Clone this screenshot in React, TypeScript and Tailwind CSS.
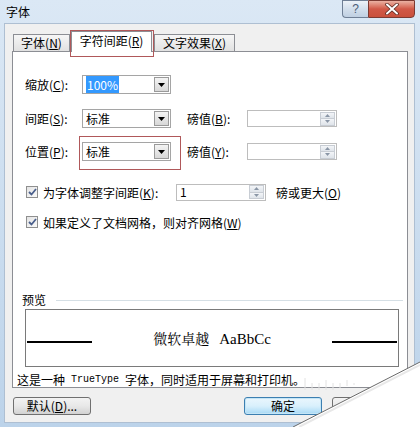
import React from "react";

function Arrow() {
  return (
    <div className="flex h-[15px] w-[15px] items-center justify-center border border-[#9a9a9a] bg-gradient-to-b from-[#f4f4f4] to-[#d8d8d8]">
      <svg width="7" height="4" viewBox="0 0 7 4">
        <path d="M0 0H7L3.5 4Z" fill="#000" />
      </svg>
    </div>
  );
}

function Combo({ children, red }: { children: React.ReactNode; red?: boolean }) {
  return (
    <div className="relative flex h-[19px] w-[89px] items-center border border-[#a5a5a5] bg-white pl-[3px] pr-[1px]">
      <div className="flex-1 leading-[15px]">{children}</div>
      <Arrow />
      {red && (
        <div className="absolute -left-[4px] -top-[7px] h-[34px] w-[102px] border border-[#b0585a]" />
      )}
    </div>
  );
}

function Spin({ value, w = "w-[90px]" }: { value?: string; w?: string }) {
  return (
    <div className={`flex h-[17px] ${w} items-center border border-[#bdbdbd] bg-white pl-[3px] pr-[1px]`}>
      <div className="flex-1 leading-[14px]">{value}</div>
      <div className="flex h-[14px] w-[15px] flex-col border border-[#c8cdd4]">
        <div className="flex flex-1 items-center justify-center bg-gradient-to-b from-[#f3f5f8] to-[#dfe4ea]">
          <svg width="5" height="3" viewBox="0 0 5 3">
            <path d="M0 3H5L2.5 0Z" fill="#8a96a6" />
          </svg>
        </div>
        <div className="flex flex-1 items-center justify-center border-t border-[#c8cdd4] bg-gradient-to-b from-[#f3f5f8] to-[#dfe4ea]">
          <svg width="5" height="3" viewBox="0 0 5 3">
            <path d="M0 0H5L2.5 3Z" fill="#8a96a6" />
          </svg>
        </div>
      </div>
    </div>
  );
}

function Check() {
  return (
    <div className="flex h-[12px] w-[12px] items-center justify-center border border-[#8f8f8f] bg-gradient-to-br from-[#e4e4e4] to-[#fafafa]">
      <svg width="9" height="8" viewBox="0 0 9 8">
        <path d="M1 4L3.5 6.5L8 1" stroke="#4a5f8c" strokeWidth="1.8" fill="none" />
      </svg>
    </div>
  );
}

function U({ c }: { c: string }) {
  return <span className="underline underline-offset-1">{c}</span>;
}

export default function App() {
  return (
    <div className="relative h-[427px] w-[420px] overflow-hidden bg-gradient-to-b from-[#dbe8f5] to-[#bcd3ea] font-['Noto_Sans_CJK_SC','Noto_Sans',sans-serif] text-[12px] text-black">
      {/* title bar */}
      <div className="flex h-[23px] items-start justify-between">
        <div className="pl-[6px] pt-[4px] leading-[15px]">字体</div>
        <div className="mr-[5px] flex">
          <div className="flex h-[18px] w-[26px] items-center justify-center rounded-bl-[4px] border border-r-0 border-[#6f7f95] bg-gradient-to-b from-[#edf2f8] via-[#d3dfec] to-[#c0d0e2]">
            <span className="font-['Liberation_Sans',sans-serif] text-[12px] leading-[12px] text-[#4c5e78]">?</span>
          </div>
          <div className="flex h-[18px] w-[47px] items-center justify-center rounded-br-[4px] border border-[#7c3a32] bg-gradient-to-b from-[#eab1a3] via-[#d15847] to-[#c9503c]">
            <svg width="14" height="12" viewBox="0 0 14 12">
              <path d="M2 1.5L12 10.5M12 1.5L2 10.5" stroke="#5a2a22" strokeWidth="3.6" strokeLinecap="round" />
              <path d="M2 1.5L12 10.5M12 1.5L2 10.5" stroke="#ffffff" strokeWidth="2" strokeLinecap="round" />
            </svg>
          </div>
        </div>
      </div>

      {/* body */}
      <div className="ml-[4px] mr-[5px] flex h-[400px] flex-col border border-[#aebfd2] bg-[#f0f0f0]">
        {/* tabs */}
        <div className="ml-[8px] flex h-[27px] items-end">
          <div className="flex h-[17px] w-[57px] items-center justify-center border border-b-0 border-[#8c8e94] bg-gradient-to-b from-[#f6f6f6] to-[#e1e1e1] leading-[14px]">
            字体(<U c="N" />)
          </div>
          <div className="relative z-10 -mb-px ml-[1px] flex h-[21px] w-[81px] items-center justify-center border border-b-0 border-[#8c8e94] bg-white pb-[2px] leading-[14px]">
            字符间距(<U c="R" />)
            <div className="absolute -left-[2px] -top-[2px] h-[27px] w-[84px] border border-[#b0585a]" />
          </div>
          <div className="ml-[2px] flex h-[17px] w-[81px] items-center justify-center border border-b-0 border-[#8c8e94] bg-gradient-to-b from-[#f6f6f6] to-[#e1e1e1] leading-[14px]">
            文字效果(<U c="X" />)
          </div>
        </div>

        {/* panel */}
        <div className="ml-[7px] flex h-[337px] w-[396px] flex-col border border-[#8c8e94] bg-white">
          {/* row 1 */}
          <div className="ml-[12px] mt-[23px] flex h-[19px] items-center">
            <div className="w-[57px] leading-[15px]">
              缩放(<U c="C" />):
            </div>
            <Combo>
              <span className="bg-[#3399ff] px-[1px] text-white">100%</span>
            </Combo>
          </div>
          {/* row 2 */}
          <div className="ml-[12px] mt-[15px] flex h-[19px] items-center">
            <div className="w-[57px] leading-[15px]">
              间距(<U c="S" />):
            </div>
            <Combo>标准</Combo>
            <div className="ml-[16px] w-[60px] leading-[15px]">
              磅值(<U c="B" />):
            </div>
            <Spin />
          </div>
          {/* row 3 */}
          <div className="ml-[12px] mt-[14px] flex h-[19px] items-center">
            <div className="w-[57px] leading-[15px]">
              位置(<U c="P" />):
            </div>
            <Combo red>标准</Combo>
            <div className="ml-[16px] w-[60px] leading-[15px]">
              磅值(<U c="Y" />):
            </div>
            <Spin />
          </div>
          {/* checkbox 1 */}
          <div className="ml-[13px] mt-[22px] flex h-[18px] items-center">
            <Check />
            <div className="ml-[5px] w-[133px] leading-[15px]">
              为字体调整字间距(<U c="K" />):
            </div>
            <Spin value="1" />
            <div className="ml-[10px] leading-[15px]">
              磅或更大(<U c="O" />)
            </div>
          </div>
          {/* checkbox 2 */}
          <div className="ml-[13px] mt-[12px] flex h-[18px] items-center">
            <Check />
            <div className="ml-[5px] leading-[15px]">
              如果定义了文档网格，则对齐网格(<U c="W" />)
            </div>
          </div>
          {/* preview header */}
          <div className="ml-[9px] mr-[4px] mt-[62px] flex h-[14px] items-center">
            <div className="leading-[14px]">预览</div>
            <div className="ml-[10px] h-px flex-1 bg-[#d5dfe5]" />
          </div>
          {/* preview box */}
          <div className="ml-[12px] mt-[2px] flex h-[58px] w-[374px] items-center border border-[#7a7a7a] bg-white">
            <div className="ml-[1px] mt-[8px] h-[2px] w-[65px] bg-black" />
            <div className="flex-1 text-center text-[14px] leading-[18px]">
              <span className="font-['Noto_Serif_CJK_SC','Noto_Sans_CJK_SC',serif]">微软卓越</span>
              <span className="ml-[10px] font-['Liberation_Serif',serif] text-[15px]">AaBbCc</span>
            </div>
            <div className="mr-[1px] mt-[8px] h-[2px] w-[65px] bg-black" />
          </div>
          {/* truetype note */}
          <div className="ml-[4px] mt-[6px] flex h-[14px] items-center leading-[14px]">
            这是一种 <span className="font-['Liberation_Mono',monospace] text-[10px]">&nbsp;TrueType&nbsp;</span> 字体，同时适用于屏幕和打印机。
          </div>
        </div>

        {/* buttons */}
        <div className="ml-[8px] mt-[9px] flex h-[18px] items-center">
          <div className="flex h-[18px] w-[78px] items-center justify-center rounded-[3px] border border-[#707070] bg-gradient-to-b from-[#f3f3f3] via-[#e8e8e8] to-[#d2d2d2] leading-[14px]">
            默认(<U c="D" />)...
          </div>
          <div className="ml-[153px] flex h-[18px] w-[78px] items-center justify-center rounded-[3px] border border-[#3c7fb1] bg-gradient-to-b from-[#eaf6fd] via-[#d9f0fc] to-[#a7d9f5] leading-[14px] shadow-[inset_0_0_0_1px_#c4e5f6]">
            确定
          </div>
          <div className="ml-[10px] flex h-[18px] w-[78px] items-center justify-center rounded-[3px] border border-[#707070] bg-gradient-to-b from-[#f3f3f3] via-[#e8e8e8] to-[#d2d2d2] leading-[14px]">
            取消
          </div>
        </div>
      </div>

      {/* page curl overlay */}
      <svg className="absolute left-0 top-0" width="420" height="427" viewBox="0 0 420 427">
        <g stroke="#e2e2e2" strokeWidth="1">
          <path d="M305 378V390M312 383V390M319 383V390M326 380V390M333 383V390M340 383V388M347 380V386M354 383V385" />
        </g>
        <polygon points="420,362 293,427 420,427" fill="#ffffff" />
        <path d="M420 362L293 427" stroke="#6a6a6a" strokeWidth="1" />
        <path d="M420 365L299 427" stroke="#e8e8e8" strokeWidth="2" />
      </svg>
    </div>
  );
}
